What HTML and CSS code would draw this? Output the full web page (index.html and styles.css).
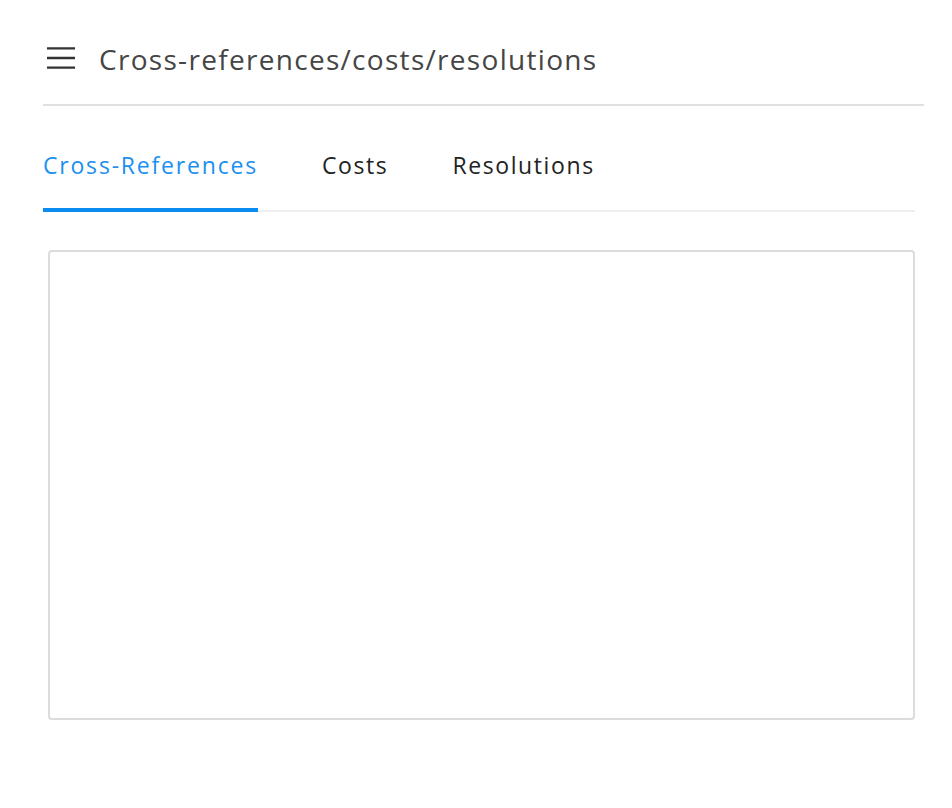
FILE: index.html
```html
<!DOCTYPE html>
<html>
<head>
<meta charset="utf-8">
<link rel="stylesheet" href="styles.css">
</head>
<body>
<div class="page">
  <header class="topbar">
    <button class="menu-btn" aria-label="menu">
      <svg width="30" height="24" viewBox="0 0 30 24"><path d="M0 2h29M0 12h29M0 22h29" stroke="#333" stroke-width="2.4" fill="none"/></svg>
    </button>
    <h1 class="title">Cross-references/costs/resolutions</h1>
  </header>
  <nav class="tabs">
    <div class="tab active">Cross-References</div>
    <div class="tab">Costs</div>
    <div class="tab">Resolutions</div>
  </nav>
  <section class="panel"></section>
</div>
</body>
</html>
```
FILE: styles.css
```css
* { box-sizing: border-box; }
html, body { margin: 0; padding: 0; background: #fff; }
body { font-family: "Open Sans", "Liberation Sans", sans-serif; }
.page { padding: 0 28px 0 43px; }
.topbar {
  display: flex;
  align-items: center;
  height: 106px;
  padding-top: 14px;
  border-bottom: 2px solid #e0e0e0;
}
.menu-btn {
  border: 0; background: none; padding: 0; margin: 0 23px 0 4px;
  display: flex; width: 29px; height: 24px;
  position: relative; top: -1px;
}
.title {
  margin: 0;
  font-size: 28px;
  font-weight: 400;
  color: #454545;
  letter-spacing: 1.3px;
}
.tabs {
  display: flex;
  margin-top: 22px;
  margin-right: 9px;
  border-bottom: 2px solid #eeeeee;
  height: 84px;
  align-items: stretch;
}
.tab {
  font-size: 23px;
  color: #222;
  padding: 21px 0 0;
  margin-right: 64px;
  letter-spacing: 1.6px;
  position: relative;
}
.tab.active { color: #1a90f0; letter-spacing: 1.8px; }
.tab.active::after {
  content: "";
  position: absolute;
  left: 0; right: 0; bottom: -2px;
  height: 4px;
  background: #0a8cf0;
}
.panel {
  margin: 38px 9px 0 5px;
  height: 470px;
  border: 2px solid #dcdcdc;
  border-radius: 4px;
}
```
